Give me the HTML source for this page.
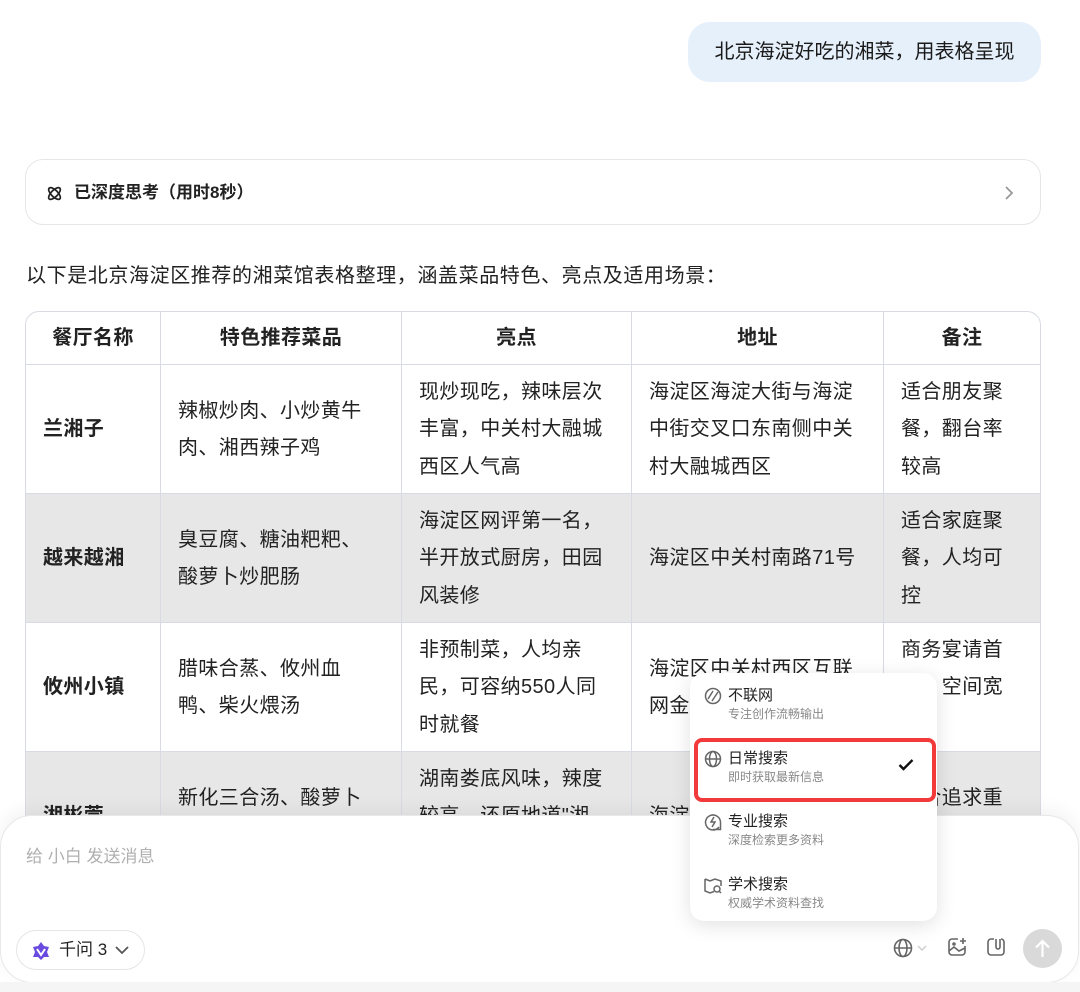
<!DOCTYPE html>
<html><head><meta charset="utf-8"><style>
*{margin:0;padding:0;box-sizing:border-box}
body{width:1080px;height:992px;overflow:hidden;background:#fff;font-family:"Liberation Sans","Noto Sans CJK SC",sans-serif;color:#222;position:relative}
.bubble{position:absolute;left:688px;top:22px;width:353px;height:60px;background:#e6f0fb;border-radius:22px;font-size:20px;line-height:60px;text-align:center;color:#1a1a1a}
.think{position:absolute;left:25px;top:159px;width:1016px;height:66px;border:1px solid #e6e6ea;border-radius:18px;font-size:17px;line-height:66px;padding-left:48px;color:#222}
.intro{position:absolute;left:26px;top:262px;font-size:20px;line-height:28px;color:#222;letter-spacing:0.6px}
table{position:absolute;left:25px;top:311px;width:1016px;border-collapse:separate;border-spacing:0;font-size:20px;line-height:37.5px;border:1px solid #d8dbe3;border-radius:14px;overflow:hidden;letter-spacing:0.4px}
td,th{border-right:1px solid #d8dbe3;border-bottom:1px solid #d8dbe3;padding:2px 17px 0;vertical-align:middle;text-align:left;color:#222;font-weight:normal;white-space:nowrap}
th{height:53px;text-align:center;font-weight:bold}
td{height:129px}
tr td:last-child,tr th:last-child{border-right:none}
tr.g td{background:#e7e7e7}
td.n{font-weight:bold}
.inp{position:absolute;left:0;top:815px;width:1079px;height:168px;background:#fff;border:1px solid #e8e8ea;border-radius:32px;box-shadow:0 -6px 18px rgba(0,0,0,0.05)}
.bot{position:absolute;left:0;top:982px;width:1080px;height:10px;background:#f5f5f6}
.ph{position:absolute;left:26px;top:842px;font-size:17px;color:#b0b0b0}
.model{position:absolute;left:16px;top:930px;width:129px;height:40px;border:1px solid #e5e5e8;border-radius:20px;font-size:17px;line-height:38px;padding-left:42px;color:#222}
.menu{position:absolute;left:690px;top:673px;width:247px;height:248px;background:#fff;border-radius:14px;box-shadow:0 4px 20px rgba(0,0,0,0.12)}
.it{position:absolute;left:38px;font-size:15px;color:#222;line-height:20px}
.it small{display:block;font-size:12px;color:#888;line-height:16px}
.ic{position:absolute;left:14px}
.red{position:absolute;left:694px;top:738px;width:242px;height:64px;border:4px solid #f23a3a;border-radius:8px}
.send{position:absolute;left:1023px;top:929px;width:39px;height:39px;border-radius:50%;background:#d9d9d9}
</style></head><body>
<div class="bubble">北京海淀好吃的湘菜，用表格呈现</div>
<div class="think">
<svg style="position:absolute;left:20px;top:25px" width="17" height="17" viewBox="0 0 18 18" fill="none" stroke="#222" stroke-width="1.8"><ellipse cx="9" cy="9" rx="8" ry="3.5" transform="rotate(45 9 9)"/><ellipse cx="9" cy="9" rx="8" ry="3.5" transform="rotate(-45 9 9)"/></svg>
<b style="font-weight:600">已深度思考（用时8秒）</b>
<svg style="position:absolute;right:26px;top:25px" width="10" height="16" viewBox="0 0 10 16" fill="none" stroke="#999" stroke-width="1.8"><path d="M2 2l6 6-6 6"/></svg>
</div>
<div class="intro">以下是北京海淀区推荐的湘菜馆表格整理，涵盖菜品特色、亮点及适用场景：</div>
<table>
<colgroup><col style="width:135px"><col style="width:241px"><col style="width:230px"><col style="width:252px"><col></colgroup>
<tr><th>餐厅名称</th><th>特色推荐菜品</th><th>亮点</th><th>地址</th><th>备注</th></tr>
<tr><td class="n">兰湘子</td><td>辣椒炒肉、小炒黄牛<br>肉、湘西辣子鸡</td><td>现炒现吃，辣味层次<br>丰富，中关村大融城<br>西区人气高</td><td>海淀区海淀大街与海淀<br>中街交叉口东南侧中关<br>村大融城西区</td><td>适合朋友聚<br>餐，翻台率<br>较高</td></tr>
<tr class="g"><td class="n">越来越湘</td><td>臭豆腐、糖油粑粑、<br>酸萝卜炒肥肠</td><td>海淀区网评第一名，<br>半开放式厨房，田园<br>风装修</td><td>海淀区中关村南路71号</td><td>适合家庭聚<br>餐，人均可<br>控</td></tr>
<tr><td class="n">攸州小镇</td><td>腊味合蒸、攸州血<br>鸭、柴火煨汤</td><td>非预制菜，人均亲<br>民，可容纳550人同<br>时就餐</td><td>海淀区中关村西区互联<br>网金融中心</td><td>商务宴请首<br>选，空间宽<br>敞</td></tr>
<tr class="g"><td class="n">湘彬萱</td><td>新化三合汤、酸萝卜<br>炒</td><td>湖南娄底风味，辣度<br>较高，还原地道"湘<br>味</td><td>海淀区</td><td>适合追求重<br>口地道风味</td></tr>
</table>
<div class="inp"></div>
<div class="bot"></div>
<div class="ph">给 小白 发送消息</div>
<div class="model">
<svg style="position:absolute;left:14px;top:10px" width="20" height="20" viewBox="0 0 20 20"><path d="M10 1l3 4 5 1-2 5 2 5-5 0-3 3-3-3-5 0 2-5-2-5 5-1z" fill="#6a4be0"/><path d="M6 8l4 6 4-6" fill="none" stroke="#fff" stroke-width="2"/></svg>
千问 3
<svg style="position:absolute;left:98px;top:15px" width="14" height="9" viewBox="0 0 14 9" fill="none" stroke="#555" stroke-width="1.8"><path d="M1 1l6 6 6-6"/></svg>
</div>
<div class="menu">
<svg class="ic" style="top:14px" width="18" height="18" viewBox="0 0 18 18" fill="none" stroke="#666" stroke-width="1.5"><circle cx="9" cy="9" r="7.5"/><path d="M4 12l5-8M8 14l6-9"/></svg>
<div class="it" style="top:13px">不联网<small>专注创作流畅输出</small></div>
<svg class="ic" style="top:77px" width="18" height="18" viewBox="0 0 18 18" fill="none" stroke="#666" stroke-width="1.5"><circle cx="9" cy="9" r="7.5"/><ellipse cx="9" cy="9" rx="3.5" ry="7.5"/><path d="M1.5 9h15"/></svg>
<div class="it" style="top:76px">日常搜索<small>即时获取最新信息</small></div>
<svg style="position:absolute;left:208px;top:86px" width="16" height="12" viewBox="0 0 16 12" fill="none" stroke="#111" stroke-width="2.4"><path d="M1.5 6l4 4 9-9"/></svg>
<svg class="ic" style="top:140px" width="18" height="18" viewBox="0 0 18 18" fill="none" stroke="#666" stroke-width="1.5"><path d="M15 14A7.5 7.5 0 1 1 16.5 9v7.5H9"/><path d="M10 4l-3 5h4l-3 5"/></svg>
<div class="it" style="top:139px">专业搜索<small>深度检索更多资料</small></div>
<svg class="ic" style="top:203px" width="18" height="18" viewBox="0 0 18 18" fill="none" stroke="#666" stroke-width="1.5"><path d="M1 3l5 2 5-2 6 2v5M1 3v12l5 2 4-1.5"/><circle cx="13" cy="13" r="3"/><path d="M15 15l2 2"/></svg>
<div class="it" style="top:202px">学术搜索<small>权威学术资料查找</small></div>
</div>
<div class="red"></div>
<svg style="position:absolute;left:893px;top:938px" width="20" height="20" viewBox="0 0 20 20" fill="none" stroke="#666" stroke-width="1.6"><circle cx="10" cy="10" r="8.5"/><ellipse cx="10" cy="10" rx="4" ry="8.5"/><path d="M1.5 10h17"/></svg>
<svg style="position:absolute;left:917px;top:945px" width="10" height="6" viewBox="0 0 10 6" fill="none" stroke="#ccc" stroke-width="1.4"><path d="M1 1l4 4 4-4"/></svg>
<svg style="position:absolute;left:947px;top:937px" width="20" height="20" viewBox="0 0 20 20" fill="none" stroke="#666" stroke-width="1.6"><path d="M11 2H5a3 3 0 0 0-3 3v10a3 3 0 0 0 3 3h10a3 3 0 0 0 3-3V9"/><path d="M2 14l5-4 5 4 6-3"/><circle cx="7" cy="7" r="1"/><path d="M16 1v6M13 4h6"/></svg>
<svg style="position:absolute;left:986px;top:937px" width="20" height="20" viewBox="0 0 20 20" fill="none" stroke="#666" stroke-width="1.6"><path d="M8 2H5a3 3 0 0 0-3 3v10a3 3 0 0 0 3 3h10a3 3 0 0 0 3-3V5a3 3 0 0 0-3-3"/><path d="M10 2v8a2 2 0 0 0 4 0V2"/></svg>
<div class="send"><svg style="position:absolute;left:11px;top:10px" width="17" height="19" viewBox="0 0 17 19" fill="none" stroke="#fff" stroke-width="2.2"><path d="M8.5 18V2M2 8.5l6.5-6.5 6.5 6.5"/></svg></div>
</body></html>
